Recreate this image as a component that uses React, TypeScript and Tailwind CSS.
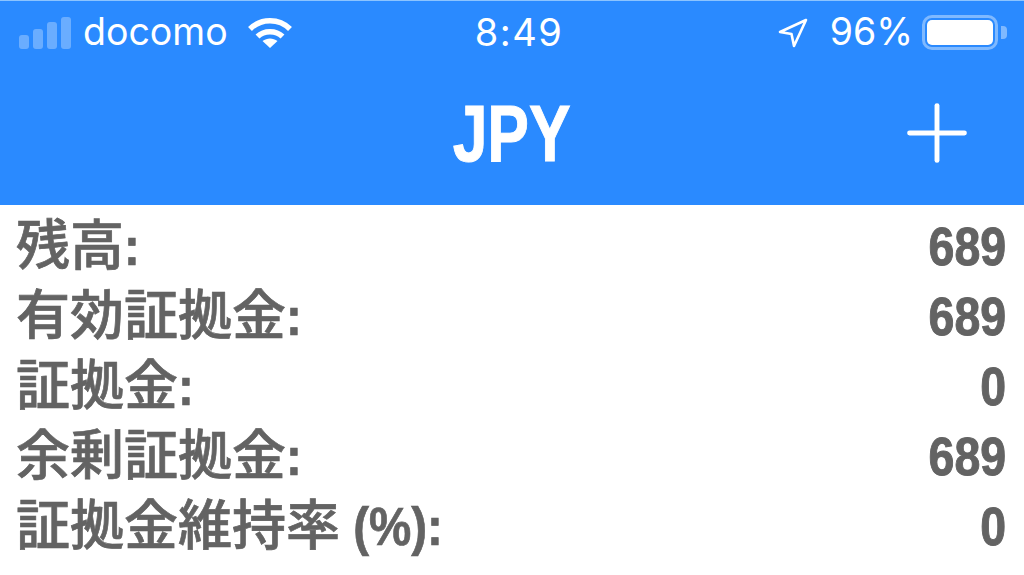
import { Plus } from 'lucide-react'

const rows = [
  { label: '残高', tail: ':', value: '689' },
  { label: '有効証拠金', tail: ':', value: '689' },
  { label: '証拠金', tail: ':', value: '0' },
  { label: '余剰証拠金', tail: ':', value: '689' },
  { label: '証拠金維持率', tail: '\u00a0(%):', value: '0' },
]

const font = 'font-["Liberation_Sans","Noto_Sans_CJK_JP",sans-serif]'

function Signal() {
  return (
    <div className="flex items-end gap-[4px] opacity-30">
      <div className="w-[10px] h-[14px] rounded-[3px] bg-white" />
      <div className="w-[10px] h-[20px] rounded-[3px] bg-white" />
      <div className="w-[10px] h-[27px] rounded-[3px] bg-white" />
      <div className="w-[10px] h-[32px] rounded-[3px] bg-white" />
    </div>
  )
}

function Wifi() {
  return (
    <svg width="46" height="32" viewBox="0 0 46 32" fill="none" stroke="white" strokeWidth="5.5">
      <path d="M3 12C14 1 32 1 43 12" />
      <path d="M10.5 19.5C17 13 29 13 35.5 19.5" />
      <path d="M23 31L15.5 24C20 20.5 26 20.5 30.5 24Z" fill="white" stroke="none" />
    </svg>
  )
}

function Arrow() {
  return (
    <svg width="30" height="30" viewBox="0 0 30 30" fill="none" stroke="white" strokeWidth="2.6" strokeLinejoin="round">
      <path d="M28 2L2 14L13.5 16L16 28Z" />
    </svg>
  )
}

function Battery() {
  return (
    <div className="flex items-center gap-[3px]">
      <div className="w-[76px] h-[35px] rounded-[10px] border-[3px] border-white/40 p-[2px]">
        <div className="h-full rounded-[5px] bg-white" />
      </div>
      <div className="w-[6px] h-[13px] rounded-r-[4px] bg-white/40" />
    </div>
  )
}

export default function App() {
  return (
    <div className={`w-[1024px] h-[575px] overflow-hidden bg-white ${font}`}>
      <div className="h-[205px] bg-[#2a8aff] border-t border-[#8cc4ff] text-white">
        {/* Status bar */}
        <div className="h-[63px] grid grid-cols-3 items-center pl-[19px] pr-[17px]">
          <div className="flex items-center">
            <Signal />
            <span className="ml-[12px] text-[37.5px] font-['Inter',sans-serif]">docomo</span>
            <div className="ml-[19px]"><Wifi /></div>
          </div>
          <div className="pl-[12px] text-center text-[38px] font-['Inter',sans-serif] tracking-[1.5px]">8:49</div>
          <div className="flex items-center justify-end">
            <Arrow />
            <span className="ml-[22px] mr-[9px] text-[37.5px] font-['Inter',sans-serif]">96%</span>
            <Battery />
          </div>
        </div>
        {/* Nav bar */}
        <div className="h-[141px] flex items-center justify-center relative pb-[2px]">
          <span className="text-[80px] font-bold leading-none scale-x-[0.78] [-webkit-text-stroke:1px_white]">JPY</span>
          <Plus className="absolute right-[40px] top-[22px]" size={94} strokeWidth={1.25} />
        </div>
      </div>

      {/* Account rows */}
      <div className="flex flex-col pt-[6px] pl-[16px] pr-[18px] text-[#636363]">
        {rows.map(row => (
          <div key={row.label} className="h-[70px] flex items-center justify-between">
            <span className="text-[54px] leading-none font-medium whitespace-nowrap [-webkit-text-stroke:0.7px_#636363]">
              {row.label}
              <span className="inline-block font-bold scale-x-[0.88] origin-left">{row.tail}</span>
            </span>
            <span className="text-[54px] leading-none font-bold scale-x-[0.86] origin-right [-webkit-text-stroke:1px_#636363]">{row.value}</span>
          </div>
        ))}
      </div>
    </div>
  )
}
